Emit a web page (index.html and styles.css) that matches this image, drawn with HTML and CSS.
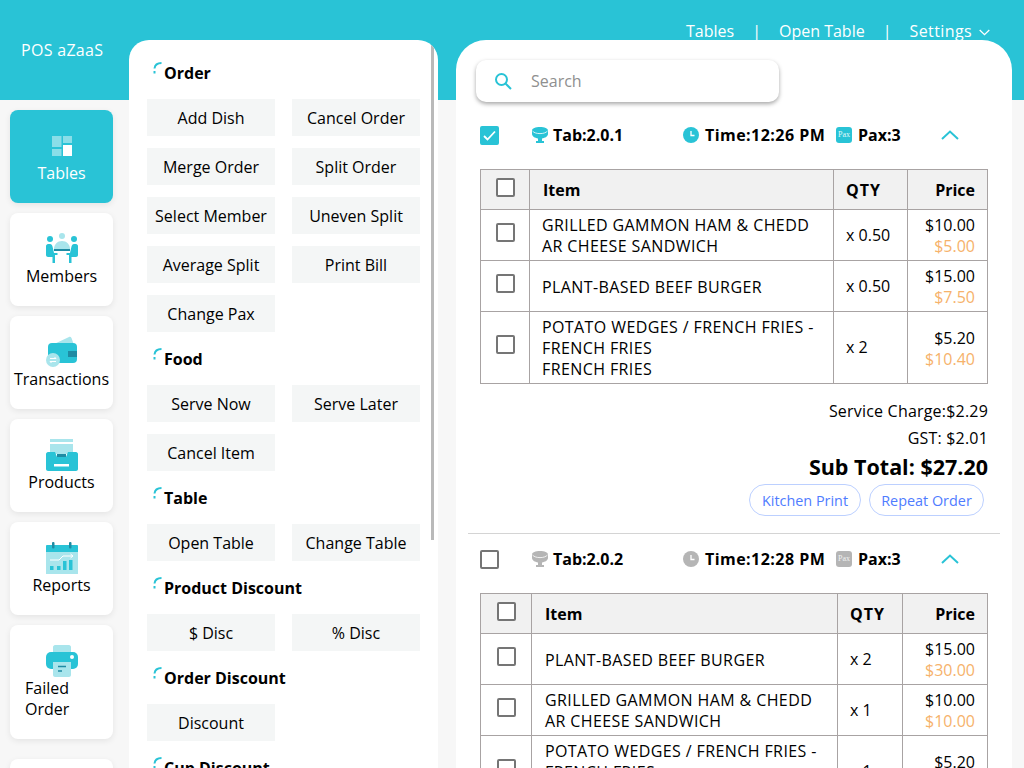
FILE: index.html
```html
<!DOCTYPE html>
<html lang="en">
<head>
    <meta charset="UTF-8">
    <meta name="viewport" content="width=device-width, initial-scale=1.0">
    <title>POS aZaaS</title>
    <link rel="stylesheet" href="styles.css">
</head>
<body>
    <svg class="icon-defs" width="0" height="0">
        <symbol id="i-tab" viewBox="0 0 16 16">
            <path d="M0 3.500C0 1.500 3.500 0 8 0s8 1.500 8 3.500V7c0 2.300-2.800 4-6 4.400V14h2v2H4v-2h2v-2.600C2.800 11 0 9.300 0 7z" fill="currentColor"/>
            <path d="M.5 4c1.500 1.800 4.300 2.600 7.500 2.600S14 5.800 15.500 4" fill="none" stroke="#fff" stroke-width="1" opacity=".8"/>
        </symbol>
        <symbol id="i-clock" viewBox="0 0 16 16">
            <circle cx="8" cy="8" r="8" fill="currentColor"/>
            <path d="M8 4v4.500h3.500" fill="none" stroke="#fff" stroke-width="1.300"/>
        </symbol>
        <symbol id="i-up" viewBox="0 0 18 10">
            <path d="M1 9l8-7.500L17 9" fill="none" stroke="#29c3d6" stroke-width="2"/>
        </symbol>
        <symbol id="i-arc" viewBox="0 0 9 12">
            <path d="M8.500 1C5 1 2 2.500 1.500 6.500M1.500 9v2.500" fill="none" stroke="#29c3d6" stroke-width="2"/>
        </symbol>
    </svg>

    <div class="app">
        <header class="topbar">
            <div class="brand">POS aZaaS</div>
            <nav class="topnav">
                <a>Tables</a>
                <span class="sep">|</span>
                <a>Open Table</a>
                <span class="sep">|</span>
                <a class="nav-settings">Settings</a>
                <svg class="nav-caret" width="11" height="7" viewBox="0 0 11 7"><path d="M.7 1l4.800 4.600L10.300 1" fill="none" stroke="#fff" stroke-width="1.300"/></svg>
            </nav>
        </header>

        <div class="workspace">
            <aside class="sidebar">
                <a class="side-card active">
                    <svg class="side-icon" viewBox="0 0 32 32">
                        <rect x="6" y="6" width="9.500" height="11" fill="#fff" opacity=".45"/>
                        <rect x="17" y="6" width="9" height="7" fill="#fff" opacity=".45"/>
                        <rect x="6" y="19" width="9.500" height="7" fill="#fff" opacity=".45"/>
                        <rect x="17" y="15" width="9" height="11" fill="#fff"/>
                    </svg>
                    <span class="side-label">Tables</span>
                </a>
                <a class="side-card">
                    <svg class="side-icon" viewBox="0 0 32 32">
                        <circle cx="4" cy="6" r="3" fill="#29c3d6"/>
                        <circle cx="16" cy="3" r="3" fill="#a9e5ec"/>
                        <circle cx="28" cy="6" r="3" fill="#29c3d6"/>
                        <path d="M8 16c0-4.500 3.500-8 8-8s8 3.500 8 8z" fill="#a9e5ec"/>
                        <rect x="8" y="16" width="16" height="2" fill="#1f8ba3"/>
                        <path d="M0 13c0-1 1-2 2-2h2c1.500 0 2 1 2.500 2.500L8 20h3.500v2H9v8H6.500v-6H2c-1 0-2-1-2-2z" fill="#29c3d6"/>
                        <path d="M32 13c0-1-1-2-2-2h-2c-1.500 0-2 1-2.500 2.500L24 20h-3.500v2H23v8h2.500v-6H30c1 0 2-1 2-2z" fill="#29c3d6"/>
                    </svg>
                    <span class="side-label">Members</span>
                </a>
                <a class="side-card">
                    <svg class="side-icon" viewBox="0 0 32 32">
                        <path d="M6 9L23 1c1-.5 2 0 2.500 1L28 9z" fill="#a9e5ec"/>
                        <rect x="2" y="7" width="29" height="20" rx="4" fill="#29c3d6"/>
                        <rect x="22" y="15" width="9" height="6" fill="#1f8ba3"/>
                        <circle cx="7" cy="24" r="7" fill="#a9e5ec"/>
                        <path d="M4 22.500h6l-1.500-1.500M10 25.500H4l1.500 1.500" fill="none" stroke="#fff" stroke-width="1"/>
                    </svg>
                    <span class="side-label">Transactions</span>
                </a>
                <a class="side-card">
                    <svg class="side-icon" viewBox="0 0 32 32">
                        <rect x="4" y="0" width="23" height="3" fill="#a9e5ec"/>
                        <rect x="4" y="5" width="23" height="10" fill="#a9e5ec"/>
                        <path d="M2 13h7l2 5h9l2-5h8c1 0 2 1 2 2v15c0 1-1 2-2 2H2c-1 0-2-1-2-2V15c0-1 1-2 2-2z" fill="#29c3d6"/>
                        <rect x="11" y="15" width="9" height="3" fill="#1f8ba3"/>
                        <rect x="8" y="25" width="15" height="2.500" fill="#fff"/>
                    </svg>
                    <span class="side-label">Products</span>
                </a>
                <a class="side-card">
                    <svg class="side-icon" viewBox="0 0 32 32">
                        <rect x="0" y="10" width="32" height="22" fill="#a9e5ec"/>
                        <path d="M1 3h30c.5 0 1 .5 1 1v6H0V4c0-.5.5-1 1-1z" fill="#29c3d6"/>
                        <rect x="6" y="0" width="2.500" height="6.500" rx="1" fill="#1f8ba3"/>
                        <rect x="23" y="0" width="2.500" height="6.500" rx="1" fill="#1f8ba3"/>
                        <path d="M4 18h9l4-4h10M24.500 12l2.500 2-2.500 2" fill="none" stroke="#fff" stroke-width="1"/>
                        <rect x="4" y="24" width="3.500" height="4" fill="#29c3d6"/>
                        <rect x="11" y="24" width="3.500" height="4" fill="#29c3d6"/>
                        <rect x="17" y="19" width="3.500" height="9" fill="#29c3d6"/>
                        <rect x="23" y="18" width="3.500" height="10" fill="#29c3d6"/>
                    </svg>
                    <span class="side-label">Reports</span>
                </a>
                <a class="side-card">
                    <svg class="side-icon" viewBox="0 0 32 32">
                        <path d="M9 0h14c1 0 2 1 2 2v7H7V2c0-1 1-2 2-2z" fill="#a9e5ec"/>
                        <rect x="0" y="7" width="32" height="17" rx="5" fill="#29c3d6"/>
                        <circle cx="26" cy="12" r="2" fill="#fff"/>
                        <path d="M7 17h18v13c0 1-1 2-2 2H9c-1 0-2-1-2-2z" fill="#a9e5ec"/>
                        <path d="M12 21.500h8M12 26h4" fill="none" stroke="#1f8ba3" stroke-width="1.500"/>
                    </svg>
                    <span class="side-label">Failed Order</span>
                </a>
                <a class="side-card side-card-next"></a>
            </aside>

            <section class="actions">
                <div class="scroll-thumb"></div>

                <h3 class="group-title"><svg class="arc"><use href="#i-arc"/></svg>Order</h3>
                <div class="btn-grid">
                    <button class="act-btn">Add Dish</button>
                    <button class="act-btn">Cancel Order</button>
                    <button class="act-btn">Merge Order</button>
                    <button class="act-btn">Split Order</button>
                    <button class="act-btn">Select Member</button>
                    <button class="act-btn">Uneven Split</button>
                    <button class="act-btn">Average Split</button>
                    <button class="act-btn">Print Bill</button>
                    <button class="act-btn">Change Pax</button>
                </div>

                <h3 class="group-title"><svg class="arc"><use href="#i-arc"/></svg>Food</h3>
                <div class="btn-grid">
                    <button class="act-btn">Serve Now</button>
                    <button class="act-btn">Serve Later</button>
                    <button class="act-btn">Cancel Item</button>
                </div>

                <h3 class="group-title"><svg class="arc"><use href="#i-arc"/></svg>Table</h3>
                <div class="btn-grid">
                    <button class="act-btn">Open Table</button>
                    <button class="act-btn">Change Table</button>
                </div>

                <h3 class="group-title"><svg class="arc"><use href="#i-arc"/></svg>Product Discount</h3>
                <div class="btn-grid">
                    <button class="act-btn">$ Disc</button>
                    <button class="act-btn">% Disc</button>
                </div>

                <h3 class="group-title"><svg class="arc"><use href="#i-arc"/></svg>Order Discount</h3>
                <div class="btn-grid">
                    <button class="act-btn">Discount</button>
                </div>

                <h3 class="group-title"><svg class="arc"><use href="#i-arc"/></svg>Cup Discount</h3>
            </section>

            <main class="orders">
                <div class="search">
                    <svg class="search-icon" width="18" height="18" viewBox="0 0 18 18"><circle cx="7.500" cy="7.500" r="5.500" fill="none" stroke="#29c3d6" stroke-width="2"/><path d="M11.500 11.500l5.500 5.500" stroke="#29c3d6" stroke-width="2"/></svg>
                    <span class="search-text">Search</span>
                </div>

                <article class="order">
                    <div class="order-head">
                        <span class="check on"><svg width="15" height="15" viewBox="0 0 15 15"><path d="M2 8l3.500 3.500L13 3.500" fill="none" stroke="#fff" stroke-width="1.800"/></svg></span>
                        <span class="meta meta-tab"><svg class="meta-icon"><use href="#i-tab"/></svg>Tab:2.0.1</span>
                        <span class="meta meta-time"><svg class="meta-icon"><use href="#i-clock"/></svg>Time:12:26 PM</span>
                        <span class="meta meta-pax"><span class="pax-icon">Pax</span>Pax:3</span>
                        <svg class="collapse" width="18" height="10"><use href="#i-up"/></svg>
                    </div>
                    <table class="items items-a">
                        <tr>
                            <th class="col-check"><span class="check"></span></th>
                            <th class="col-item">Item</th>
                            <th class="col-qty">QTY</th>
                            <th class="col-price">Price</th>
                        </tr>
                        <tr>
                            <td class="col-check"><span class="check"></span></td>
                            <td class="col-item">GRILLED GAMMON HAM &amp; CHEDD<br>AR CHEESE SANDWICH</td>
                            <td>x 0.50</td>
                            <td class="col-price">$10.00<span class="line-total">$5.00</span></td>
                        </tr>
                        <tr>
                            <td class="col-check"><span class="check"></span></td>
                            <td class="col-item">PLANT-BASED BEEF BURGER</td>
                            <td>x 0.50</td>
                            <td class="col-price">$15.00<span class="line-total">$7.50</span></td>
                        </tr>
                        <tr>
                            <td class="col-check"><span class="check"></span></td>
                            <td class="col-item">POTATO WEDGES / FRENCH FRIES -<br>FRENCH FRIES<br>FRENCH FRIES</td>
                            <td>x 2</td>
                            <td class="col-price">$5.20<span class="line-total">$10.40</span></td>
                        </tr>
                    </table>
                    <div class="totals">
                        <div class="total-line">Service Charge:$2.29</div>
                        <div class="total-line">GST: $2.01</div>
                        <div class="sub-total">Sub Total: $27.20</div>
                        <div class="order-actions">
                            <button class="pill pill-kitchen">Kitchen Print</button>
                            <button class="pill pill-repeat">Repeat Order</button>
                        </div>
                    </div>
                </article>

                <article class="order order-idle">
                    <div class="order-head">
                        <span class="check"></span>
                        <span class="meta meta-tab"><svg class="meta-icon"><use href="#i-tab"/></svg>Tab:2.0.2</span>
                        <span class="meta meta-time"><svg class="meta-icon"><use href="#i-clock"/></svg>Time:12:28 PM</span>
                        <span class="meta meta-pax"><span class="pax-icon">Pax</span>Pax:3</span>
                        <svg class="collapse" width="18" height="10"><use href="#i-up"/></svg>
                    </div>
                    <table class="items items-b">
                        <tr>
                            <th class="col-check"><span class="check"></span></th>
                            <th class="col-item">Item</th>
                            <th class="col-qty">QTY</th>
                            <th class="col-price">Price</th>
                        </tr>
                        <tr>
                            <td class="col-check"><span class="check"></span></td>
                            <td class="col-item">PLANT-BASED BEEF BURGER</td>
                            <td>x 2</td>
                            <td class="col-price">$15.00<span class="line-total">$30.00</span></td>
                        </tr>
                        <tr>
                            <td class="col-check"><span class="check"></span></td>
                            <td class="col-item">GRILLED GAMMON HAM &amp; CHEDD<br>AR CHEESE SANDWICH</td>
                            <td>x 1</td>
                            <td class="col-price">$10.00<span class="line-total">$10.00</span></td>
                        </tr>
                        <tr>
                            <td class="col-check"><span class="check"></span></td>
                            <td class="col-item">POTATO WEDGES / FRENCH FRIES -<br>FRENCH FRIES<br>FRENCH FRIES</td>
                            <td>x 1</td>
                            <td class="col-price">$5.20<span class="line-total">$5.20</span></td>
                        </tr>
                    </table>
                </article>
            </main>
        </div>
    </div>
</body>
</html>
```

FILE: styles.css
```css
body {
    margin: 0;
    height: 768px;
    overflow: hidden;
    background: #f7f7f7;
    font-family: 'Open Sans', 'Noto Sans', sans-serif;
    font-size: 16px;
    line-height: 21px;
    color: #000;
}

.icon-defs {
    position: absolute;
}

.topbar {
    height: 100px;
    background: #29c3d6;
    color: #fff;
    display: flex;
    justify-content: space-between;
    align-items: flex-start;
}

.brand {
    margin: 40px 0 0 21px;
    letter-spacing: 0.3px;
}

.topnav {
    margin: 21px 34px 0 0;
    display: flex;
    align-items: center;
    gap: 18px;
}

.nav-settings {
    letter-spacing: 0.4px;
}

.nav-caret {
    margin: 2px 0 0 -11px;
}

/* Tres columnas sobre la barra */
.workspace {
    margin-top: -60px;
    display: flex;
    align-items: flex-start;
}

.sidebar {
    width: 103px;
    padding: 70px 16px 0 10px;
    display: flex;
    flex-direction: column;
    gap: 10px;
    flex-shrink: 0;
}

.side-card {
    box-sizing: border-box;
    min-height: 93px;
    padding: 20px 15px 19px;
    background: #fff;
    border-radius: 8px;
    box-shadow: 0 2px 6px rgba(0, 0, 0, 0.08);
    display: flex;
    flex-direction: column;
    align-items: center;
}

.side-card.active {
    background: #29c3d6;
    color: #fff;
}

.side-card-next {
    margin-top: 10px;
}

.side-icon {
    width: 32px;
    height: 32px;
    flex-shrink: 0;
}

.side-label {
    margin-top: 1px;
}

/* Panel de acciones */
.actions {
    box-sizing: border-box;
    width: 309px;
    height: 800px;
    margin-right: 18px;
    padding: 6px 18px 0;
    background: #fff;
    border-radius: 20px 20px 0 0;
    position: relative;
    overflow: hidden;
    flex-shrink: 0;
}

.scroll-thumb {
    position: absolute;
    top: 0;
    right: 4px;
    width: 3px;
    height: 500px;
    background: #b9b9b9;
}

.group-title {
    margin: 0;
    height: 53px;
    padding: 17px 0 0 17px;
    box-sizing: border-box;
    font-size: 16px;
    line-height: 21px;
    font-weight: 700;
    position: relative;
}

.arc {
    position: absolute;
    left: 6px;
    top: 16px;
    width: 9px;
    height: 12px;
}

.btn-grid {
    display: grid;
    grid-template-columns: 128px 128px;
    column-gap: 17px;
    row-gap: 12px;
}

.act-btn {
    height: 37px;
    padding: 2px 0 0;
    border: none;
    background: #f4f6f6;
    font: inherit;
    color: #000;
    white-space: nowrap;
}

/* Panel de pedidos */
.orders {
    box-sizing: border-box;
    width: 556px;
    height: 800px;
    background: #fff;
    border-radius: 30px 30px 0 0;
    padding: 20px 12px 0;
    overflow: hidden;
    flex-shrink: 0;
}

.search {
    box-sizing: border-box;
    width: 303px;
    height: 42px;
    margin-left: 8px;
    padding-left: 18px;
    border-radius: 10px;
    background: #fff;
    box-shadow: 0 2px 4px rgba(0, 0, 0, 0.35);
    display: flex;
    align-items: center;
}

.search-text {
    margin-left: 19px;
    color: #8f8f8f;
}

.order {
    padding: 23px 12px 17px;
}

.order-idle {
    border-top: 1px solid #d4d4d4;
    padding-top: 15px;
}

.order-head {
    height: 20px;
    margin-bottom: 24px;
    display: flex;
    align-items: center;
    font-weight: 700;
    color: #000;
}

.meta {
    display: flex;
    align-items: center;
    gap: 6px;
    white-space: nowrap;
}

.meta-tab {
    margin-left: 33px;
    width: 151px;
    gap: 5px;
}

.meta-time {
    width: 153px;
    letter-spacing: 0.45px;
}

.meta-pax {
    width: 105px;
}

.meta-icon {
    width: 16px;
    height: 16px;
    color: #29c3d6;
}

.pax-icon {
    width: 16px;
    height: 16px;
    border-radius: 3px;
    background: #29c3d6;
    color: #e4f9fb;
    font: 400 8px/16px 'Liberation Serif', serif;
    text-align: center;
    letter-spacing: 0;
}

.order-idle .meta-icon {
    color: #b5b5b5;
}

.order-idle .pax-icon {
    background: #b5b5b5;
    color: #f2f2f2;
}

.check {
    box-sizing: border-box;
    display: inline-block;
    width: 19px;
    height: 19px;
    border: 2px solid #757575;
    border-radius: 2px;
    background: #fff;
    vertical-align: middle;
}

.check.on {
    background: #29c3d6;
    border-color: #29c3d6;
}

.check.on svg {
    display: block;
}

/* Tablas */
.items {
    width: 508px;
    border-collapse: collapse;
    table-layout: fixed;
}

.items th,
.items td {
    border: 1px solid #a8a3a3;
    padding: 5px 12px 3px;
    text-align: left;
    font-weight: 400;
    line-height: 21px;
}

.items th {
    height: 31px;
    background: #f1f1f1;
    font-weight: 700;
}

.items td:nth-child(3) {
    padding: 4px 12px;
}

.items .col-check {
    padding: 0;
    text-align: center;
}

.items td.col-check .check {
    margin-bottom: 6px;
}

.items th.col-check .check {
    margin-bottom: 4px;
}

.items .col-price {
    text-align: right;
}

.items td.col-item {
    letter-spacing: 0.4px;
}

.items th.col-item {
    padding-left: 13px;
}

.items th.col-qty {
    letter-spacing: 1px;
}

.items-a .col-check { width: 48px; }
.items-a .col-qty { width: 49px; }
.items-a .col-price { width: 55px; }

.items-b .col-check { width: 50px; }
.items-b .col-qty { width: 40px; }
.items-b .col-price { width: 60px; }

.items-b td.col-item {
    padding-left: 13px;
}

.line-total {
    display: block;
    color: #f6b26b;
}

/* Totales */
.totals {
    text-align: right;
    margin-top: 17px;
}

.total-line {
    height: 27px;
    letter-spacing: 0.2px;
}

.sub-total {
    font-size: 21.5px;
    line-height: 24px;
    font-weight: 700;
}

.order-actions {
    margin-top: 5px;
    padding-right: 4px;
    display: flex;
    justify-content: flex-end;
    gap: 8px;
}

.pill {
    height: 32px;
    padding: 0;
    border: 1px solid #bcd0ff;
    border-radius: 16px;
    background: #fff;
    font: inherit;
    font-size: 14.4px;
    color: #4f7cff;
}

.pill-kitchen {
    width: 112px;
}

.pill-repeat {
    width: 115px;
}
```
